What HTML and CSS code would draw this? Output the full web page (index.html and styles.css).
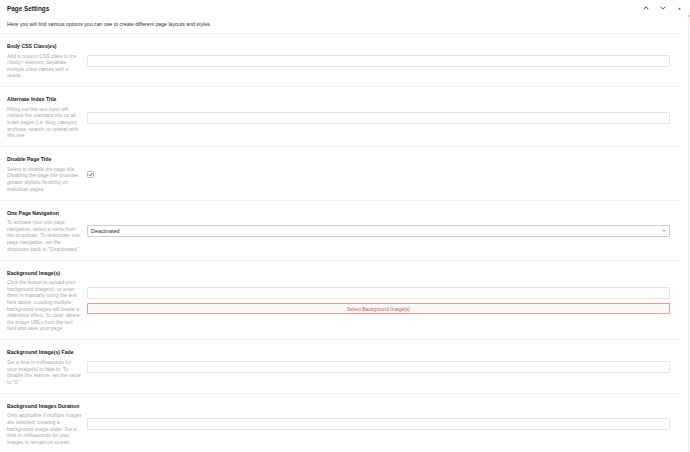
FILE: index.html
```html
<!DOCTYPE html>
<html lang="en">
<head>
<meta charset="utf-8">
<title>Page Settings</title>
<link rel="stylesheet" href="styles.css">
</head>
<body>
<div class="shell">
  <div class="panel">
    <div class="header">
      <h1 class="header-title">Page Settings</h1>
      <div class="header-actions">
        <svg class="hicon" viewBox="0 0 10 6" width="6" height="4"><path d="M1 5 L5 1 L9 5" fill="none" stroke="#444" stroke-width="1.6"/></svg>
        <svg class="hicon" viewBox="0 0 10 6" width="6" height="4"><path d="M1 1 L5 5 L9 1" fill="none" stroke="#444" stroke-width="1.6"/></svg>
        <svg class="hicon small" viewBox="0 0 6 6" width="3" height="3"><path d="M0 5 L3 1 L6 5 Z" fill="#666"/></svg>
      </div>
    </div>
    <p class="intro">Here you will find various options you can use to create different page layouts and styles.</p>

    <div class="row">
      <div class="label">
        <h2 class="label-title">Body CSS Class(es)</h2>
        <p class="label-desc">Add a custom CSS class to the<br>&lt;body&gt; element. Separate<br>multiple class names with a<br>space.</p>
      </div>
      <div class="field"><div class="text-input"></div></div>
    </div>

    <div class="row">
      <div class="label">
        <h2 class="label-title">Alternate Index Title</h2>
        <p class="label-desc">Filling out this text input will<br>replace the standard title on all<br>index pages (i.e. blog, category<br>archives, search, et cetera) with<br>this one.</p>
      </div>
      <div class="field"><div class="text-input"></div></div>
    </div>

    <div class="row">
      <div class="label">
        <h2 class="label-title">Disable Page Title</h2>
        <p class="label-desc">Select to disable the page title.<br>Disabling the page title provides<br>greater stylistic flexibility on<br>individual pages.</p>
      </div>
      <div class="field">
        <span class="checkbox">
          <svg viewBox="0 0 10 10" width="5" height="5"><path d="M1.5 5.2 L4 7.8 L8.8 2.2" fill="none" stroke="#555" stroke-width="1.8"/></svg>
        </span>
      </div>
    </div>

    <div class="row">
      <div class="label">
        <h2 class="label-title">One Page Navigation</h2>
        <p class="label-desc">To activate your one page<br>navigation, select a menu from<br>the dropdown. To deactivate one<br>page navigation, set the<br>dropdown back to "Deactivated."</p>
      </div>
      <div class="field">
        <div class="select">
          <span>Deactivated</span>
          <svg viewBox="0 0 10 6" width="4" height="3"><path d="M1 1 L5 5 L9 1" fill="none" stroke="#555" stroke-width="1.6"/></svg>
        </div>
      </div>
    </div>

    <div class="row">
      <div class="label">
        <h2 class="label-title">Background Image(s)</h2>
        <p class="label-desc">Click the button to upload your<br>background image(s), or enter<br>them in manually using the text<br>field above. Loading multiple<br>background images will create a<br>slideshow effect. To clear, delete<br>the image URLs from the text<br>field and save your page.</p>
      </div>
      <div class="field stack">
        <div class="text-input"></div>
        <div class="button">Select Background Image(s)</div>
      </div>
    </div>

    <div class="row">
      <div class="label">
        <h2 class="label-title">Background Image(s) Fade</h2>
        <p class="label-desc">Set a time in milliseconds for<br>your image(s) to fade in. To<br>disable this feature, set the value<br>to "0."</p>
      </div>
      <div class="field"><div class="text-input"></div></div>
    </div>

    <div class="row last">
      <div class="label">
        <h2 class="label-title">Background Images Duration</h2>
        <p class="label-desc">Only applicable if multiple images<br>are selected, creating a<br>background image slider. Set a<br>time in milliseconds for your<br>images to remain on screen.</p>
      </div>
      <div class="field"><div class="text-input"></div></div>
    </div>
  </div>
  <div class="sidebar-edge"><span class="edge-mark"></span></div>
</div>
</body>
</html>
```

FILE: styles.css
```css
* { box-sizing: border-box; }
html, body { margin: 0; padding: 0; background: #fff; }
body {
  font-family: "Liberation Sans", Arial, sans-serif;
  color: #333;
  width: 690px;
  height: 452px;
  overflow: hidden;
}
.shell {
  display: flex;
  height: 452px;
}
.panel {
  width: 680px;
  flex: none;
}
.header {
  display: flex;
  align-items: center;
  justify-content: space-between;
  height: 16px;
  padding: 0 7px 0 7px;
}
.header-title {
  margin: 0;
  font-size: 6.4px;
  font-weight: bold;
  color: #222;
}
.header-actions {
  display: flex;
  align-items: center;
  gap: 11px;
  margin-right: -8px;
}
.hicon { display: block; }
.hicon.small { margin-left: 1px; }
.intro {
  margin: 0;
  padding: 5px 7px 5px;
  font-size: 5.2px;
  line-height: 7px;
  color: #333;
  border-bottom: 1px solid #f3f3f3;
}
.row {
  display: grid;
  grid-template-columns: 73px 1fr;
  column-gap: 7px;
  align-items: center;
  padding: 9px 10px 7.5px 7px;
  border-bottom: 1px solid #f1f1f1;
}
.row.last { border-bottom: none; }
.label { min-width: 0; }
.label-title {
  margin: 0 0 2.5px;
  font-size: 5.2px;
  line-height: 7px;
  font-weight: bold;
  color: #222;
  white-space: nowrap;
}
.label-desc {
  margin: 0;
  font-size: 5.05px;
  line-height: 6.6px;
  color: #aaaaaa;
  white-space: nowrap;
}
.field { display: flex; align-items: center; }
.field.stack { flex-direction: column; align-items: stretch; gap: 4px; }
.text-input {
  width: 100%;
  height: 12px;
  border: 1px solid #e6e6e6;
  border-radius: 1px;
  background: #fff;
}
.checkbox {
  width: 7px;
  height: 7px;
  border: 1px solid #b8b8b8;
  border-radius: 1.5px;
  display: flex;
  align-items: center;
  justify-content: center;
}
.checkbox svg { display: block; }
.select {
  width: 100%;
  height: 12px;
  border: 1px solid #cfcfcf;
  border-radius: 1px;
  display: flex;
  align-items: center;
  justify-content: space-between;
  padding: 0 3px 0 3px;
  font-size: 5.4px;
  color: #333;
}
.select svg { display: block; }
.button {
  height: 11px;
  border: none;
  box-shadow: inset 0 0 0 1px #eb9a90;
  border-radius: 1px;
  background-color: #f7f8f8;
  color: #d65a4e;
  font-size: 5px;
  display: flex;
  align-items: center;
  justify-content: center;
}
.sidebar-edge {
  width: 10px;
  flex: none;
  display: flex;
  justify-content: flex-end;
  padding-top: 13px;
}
.edge-mark {
  display: block;
  width: 2px;
  height: 100%;
  border-left: 1px solid #ececec;
  position: relative;
}
.edge-mark::after {
  content: "";
  position: absolute;
  left: 0;
  top: 2px;
  width: 1px;
  height: 2px;
  background: #f0a070;
}
```
